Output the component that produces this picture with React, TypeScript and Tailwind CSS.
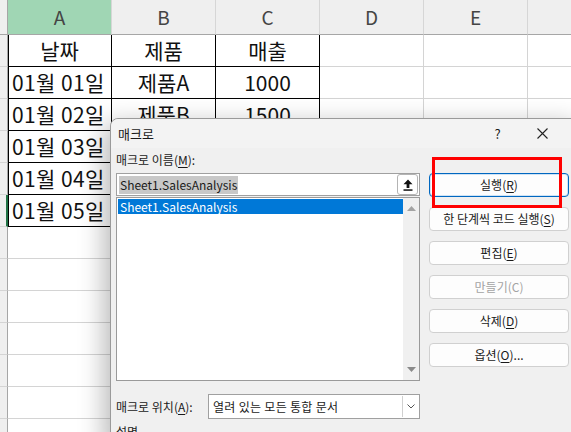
import React from "react"

const cols = ["A", "B", "C", "D", "E", "F"]

const tableRows: string[][] = [
  ["날짜", "제품", "매출"],
  ["01월 01일", "제품A", "1000"],
  ["01월 02일", "제품B", "1500"],
  ["01월 03일", "제품C", "1200"],
  ["01월 04일", "제품A", "1800"],
  ["01월 05일", "제품B", "1300"],
]

const emptyRows = 7

function Sheet() {
  return (
    <div className="grid grid-cols-[8px_104px_104px_104px_104px_104px_104px] text-[#111]">
      {/* column headers */}
      <div className="h-[35px] bg-[#efefef] border-r border-b border-[#a6a6a6]" />
      {cols.map((c) => (
        <div
          key={c}
          className={`h-[35px] flex items-center justify-center border-r border-b text-[19px] text-[#444] ${
            c === "A" ? "bg-[#a0d6b4] border-r-[#d6d6d6] border-b-[#a6a6a6]" : "bg-[#efefef] border-r-[#d6d6d6] border-b-[#a6a6a6]"
          }`}
        >
          {c}
        </div>
      ))}

      {tableRows.map((row, r) => (
        <React.Fragment key={r}>
          <div
            className={`h-[32px] bg-[#efefef] border-b border-[#d4d4d4] ${
              r === 5 ? "border-r-2 border-r-[#217346]" : "border-r border-r-[#a6a6a6]"
            }`}
          />
          {row.map((v, c) => (
            <div
              key={c}
              className={`h-[32px] flex items-center border-r border-b border-black text-[21px] leading-none ${
                c === 0 ? "shadow-[inset_1px_0_0_#000]" : ""
              } ${c === 0 && r > 0 ? "justify-start pl-[4px] tracking-[0.4px]" : "justify-center"}`}
            >
              {v}
            </div>
          ))}
          <div className="h-[32px] border-r border-b border-[#d4d4d4]" />
          <div className="h-[32px] border-r border-b border-[#d4d4d4]" />
          <div className="h-[32px] border-r border-b border-[#d4d4d4]" />
        </React.Fragment>
      ))}

      {Array.from({ length: emptyRows }).map((_, r) => (
        <React.Fragment key={`e${r}`}>
          <div className="h-[32px] bg-[#efefef] border-r border-b border-r-[#a6a6a6] border-b-[#d4d4d4]" />
          {cols.map((c) => (
            <div key={c} className="h-[32px] border-r border-b border-[#d4d4d4]" />
          ))}
        </React.Fragment>
      ))}
    </div>
  )
}

function U({ children }: { children: React.ReactNode }) {
  return <span className="underline underline-offset-[2px]">{children}</span>
}

function DlgButton({
  children,
  primary,
  disabled,
}: {
  children: React.ReactNode
  primary?: boolean
  disabled?: boolean
}) {
  return (
    <div
      className={`h-[24px] w-[140px] flex items-center justify-center rounded-[4px] text-[12px] ${
        primary
          ? "bg-[#fdfdfd] border border-[#0067c0] shadow-[inset_0_0_0_1px_#cfe3f5]"
          : "bg-[#fdfdfd] border border-[#d0d0d0]"
      } ${disabled ? "text-[#a3a3a3]" : "text-[#1a1a1a]"}`}
    >
      {children}
    </div>
  )
}

function MacroDialog() {
  return (
    <div className="absolute left-[110px] top-[118px] w-[472px] h-[330px] bg-[#f0f0f0] border border-[#9a9a9a] rounded-tl-[8px] shadow-[-6px_6px_26px_rgba(0,0,0,0.28)] text-[12px] text-[#1a1a1a]">
      {/* title bar */}
      <div className="h-[29px] flex items-center bg-[#f3f3f3] rounded-tl-[8px]">
        <span className="pl-[7px] text-[13px]">매크로</span>
        <div className="ml-auto flex items-center">
          <div className="w-[45px] flex justify-center text-[13px]">?</div>
          <div className="w-[45px] flex justify-center">
            <svg width="11" height="11" viewBox="0 0 11 11">
              <path d="M0.5 0.5 L10.5 10.5 M10.5 0.5 L0.5 10.5" stroke="#222" strokeWidth="1.1" />
            </svg>
          </div>
          <div className="w-[16px]" />
        </div>
      </div>

      {/* body */}
      <div className="flex items-start pl-[5px] pt-[4px] gap-[9px]">
        <div className="w-[304px] flex flex-col">
          <div className="h-[16px] leading-[16px]">
            매크로 이름(<U>M</U>):
          </div>
          <div className="mt-[5px] h-[23px] bg-white border border-[#a0a0a0] flex items-center pl-[2px] pr-[1px]">
            <span className="bg-[#c8c8c8] leading-[18px] px-[1px]">Sheet1.SalesAnalysis</span>
            <div className="ml-auto h-[21px] w-[21px] rounded-[3px] border border-[#b4b4b4] bg-white flex items-center justify-center">
              <svg width="10" height="12" viewBox="0 0 10 12">
                <path d="M5 0.5 L9.5 5.2 L6.4 5.2 L6.4 9 L3.6 9 L3.6 5.2 L0.5 5.2 Z" fill="#111" />
                <rect x="0.5" y="10.3" width="9" height="1.5" fill="#111" />
              </svg>
            </div>
          </div>
          <div className="mt-[1px] h-[184px] bg-white border border-[#9a9a9a] flex">
            <div className="flex-1 pt-px pl-px">
              <div className="h-[15px] bg-[#0078d7] text-white pl-[2px] leading-[15px]">Sheet1.SalesAnalysis</div>
            </div>
            <div className="w-[16px] bg-[#f0f0f0] flex flex-col items-center justify-between py-[8px]">
              <svg width="9" height="5" viewBox="0 0 9 5">
                <path d="M4.5 0 L9 5 L0 5 Z" fill="#a3a3a3" />
              </svg>
              <svg width="9" height="5" viewBox="0 0 9 5">
                <path d="M0 0 L9 0 L4.5 5 Z" fill="#8a8a8a" />
              </svg>
            </div>
          </div>
          <div className="mt-[13px] flex items-center">
            <span className="w-[92px]">
              매크로 위치(<U>A</U>):
            </span>
            <div className="h-[25px] flex-1 bg-white border border-[#a0a0a0] flex items-center pl-[4px] pr-[1px]">
              <span className="tracking-[0.3px]">열려 있는 모든 통합 문서</span>
              <div className="ml-auto h-[21px] w-[16px] border-l border-[#d0d0d0] flex items-center justify-center">
                <svg width="8" height="5" viewBox="0 0 8 5">
                  <path d="M0.5 0.5 L4 4 L7.5 0.5" stroke="#555" strokeWidth="1" fill="none" />
                </svg>
              </div>
            </div>
          </div>
          <div className="mt-[4px] flex items-center">
            <span>설명</span>
            <div className="ml-[5px] flex-1 h-px bg-[#d2d2d2]" />
          </div>
        </div>

        <div className="mt-[21px] flex flex-col gap-[10px]">
          <DlgButton primary>
            실행(<U>R</U>)
          </DlgButton>
          <DlgButton>
            한 단계씩 코드 실행(<U>S</U>)
          </DlgButton>
          <DlgButton>
            편집(<U>E</U>)
          </DlgButton>
          <DlgButton disabled>만들기(C)</DlgButton>
          <DlgButton>
            삭제(<U>D</U>)
          </DlgButton>
          <DlgButton>
            옵션(<U>O</U>)...
          </DlgButton>
        </div>
      </div>
    </div>
  )
}

export default function App() {
  return (
    <div className="relative w-[571px] h-[432px] overflow-hidden bg-white font-['Noto_Sans_CJK_KR','Noto_Sans',sans-serif]">
      <Sheet />
      <MacroDialog />
      <div className="absolute left-[432px] top-[157px] w-[130px] h-[51px] border-[3px] border-[#ff0000]" />
    </div>
  )
}
